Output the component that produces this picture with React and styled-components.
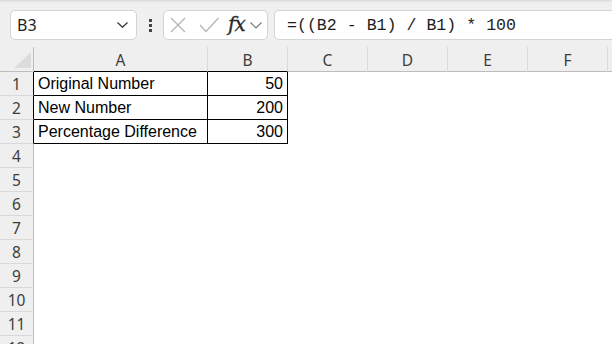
import React from 'react'
import styled, { createGlobalStyle } from 'styled-components'

const GlobalStyle = createGlobalStyle`
  html, body { margin: 0; padding: 0; background: #fff; }
  body { font-family: "Noto Sans", sans-serif; overflow: hidden; }
  * { box-sizing: border-box; }
`

const Page = styled.div`
  width: 612px;
  height: 344px;
  overflow: hidden;
  background: #fff;
`

const Toolbar = styled.div`
  height: 47px;
  display: flex;
  align-items: flex-start;
  padding: 10px 0 0 10px;
  background: linear-gradient(#d9d9d9 0px, #ebebeb 2px, #f0f0f0 4px, #f0f0f0 100%);
`

const NameBox = styled.div`
  width: 127px;
  height: 30px;
  background: #fff;
  border: 1px solid #d4d4d4;
  border-radius: 5px;
  display: flex;
  align-items: center;
  justify-content: space-between;
  padding: 0 8px 0 6px;
  font-size: 16px;
  color: #1e1e1e;
`

const Dots = styled.div`
  width: 26px;
  height: 30px;
  display: flex;
  flex-direction: column;
  align-items: center;
  justify-content: center;
  gap: 2px;
  span {
    width: 3px;
    height: 3px;
    background: #444;
  }
`

const FxBox = styled.div`
  width: 105px;
  height: 30px;
  background: #fff;
  border: 1px solid #d4d4d4;
  border-radius: 5px;
  display: flex;
  align-items: center;
  padding-left: 6px;
`

const FxLabel = styled.span`
  font-family: "DejaVu Serif", serif;
  font-style: italic;
  font-size: 20px;
  color: #2a2a2a;
  margin-left: 9px;
  letter-spacing: -1px;
  line-height: 1;
  position: relative;
  top: -1px;
  -webkit-text-stroke: 0.3px #2a2a2a;
`

const FormulaBox = styled.div`
  flex: 1;
  height: 30px;
  margin-left: 6px;
  background: #fff;
  border: 1px solid #d4d4d4;
  border-right: none;
  border-radius: 5px 0 0 5px;
  display: flex;
  align-items: center;
  padding-left: 12px;
  font-family: "Liberation Mono", monospace;
  font-size: 16.6px;
  color: #1e1e1e;
  white-space: pre;
`

const Sheet = styled.div`
  display: grid;
  grid-template-columns: 34px 174px 80px 80px 80px 80px 80px 80px;
  grid-template-rows: 25px;
  grid-auto-rows: 24px;
`

const Corner = styled.div`
  background: #efefef;
  border-right: 1px solid #bdbdbd;
  border-bottom: 1px solid #bdbdbd;
  position: relative;
  svg { position: absolute; left: 14px; top: 5px; }
`

const ColHead = styled.div`
  background: #efefef;
  border-right: 1px solid #d9d9d9;
  border-bottom: 1px solid ${p => (p.$edge ? '#000' : '#bdbdbd')};
  display: flex;
  align-items: center;
  justify-content: center;
  font-size: 15.5px;
  color: #3d3d3d;
  padding-top: 1px;
`

const RowHead = styled.div`
  background: #efefef;
  border-right: 1px solid ${p => (p.$edge ? '#000' : '#bdbdbd')};
  border-bottom: 1px solid #d9d9d9;
  display: flex;
  align-items: center;
  justify-content: center;
  font-size: 15.5px;
  color: #3d3d3d;
`

const Cell = styled.div`
  border-right: 1px solid ${p => (p.$boxed ? '#000' : 'transparent')};
  border-bottom: 1px solid ${p => (p.$boxed ? '#000' : 'transparent')};
  display: flex;
  align-items: center;
  justify-content: ${p => (p.$num ? 'flex-end' : 'flex-start')};
  padding: 0 4px 0 4px;
  font-family: "Liberation Sans", sans-serif;
  font-size: 16px;
  color: #000;
  white-space: nowrap;
`

const cols = ['A', 'B', 'C', 'D', 'E', 'F', 'G']

const data = [
  ['Original Number', '50'],
  ['New Number', '200'],
  ['Percentage Difference', '300'],
]

function App() {
  const rows = Array.from({ length: 12 }, (_, i) => i + 1)
  return (
    <Page>
      <GlobalStyle />
      <Toolbar>
        <NameBox>
          <span>B3</span>
          <svg width="11" height="6" viewBox="0 0 11 6">
            <path d="M0.5 0.5 L5.5 5.3 L10.5 0.5" fill="none" stroke="#333" strokeWidth="1.2" />
          </svg>
        </NameBox>
        <Dots>
          <span />
          <span />
          <span />
        </Dots>
        <FxBox>
          <svg width="16" height="16" viewBox="0 0 16 16">
            <path d="M1 1 L15 15 M15 1 L1 15" stroke="#b5b5b5" strokeWidth="1.3" fill="none" />
          </svg>
          <svg width="20" height="16" viewBox="0 0 20 16" style={{ marginLeft: 13 }}>
            <path d="M1 8 L7 14.5 L19.5 1" stroke="#b5b5b5" strokeWidth="1.3" fill="none" />
          </svg>
          <FxLabel>fx</FxLabel>
          <svg width="12" height="7" viewBox="0 0 12 7" style={{ marginLeft: 5 }}>
            <path d="M0.5 0.5 L6 6 L11.5 0.5" fill="none" stroke="#777" strokeWidth="1.1" />
          </svg>
        </FxBox>
        <FormulaBox>=((B2 - B1) / B1) * 100</FormulaBox>
      </Toolbar>
      <Sheet>
        <Corner>
          <svg width="17" height="16" viewBox="0 0 17 16">
            <polygon points="17,0 17,16 0,16" fill="#dcdcdc" />
          </svg>
        </Corner>
        {cols.map((c, i) => (
          <ColHead key={c} $edge={i < 2}>{c}</ColHead>
        ))}
        {rows.map(r => (
          <React.Fragment key={r}>
            <RowHead $edge={r <= 3}>{r}</RowHead>
            {cols.map((c, ci) => {
              const row = data[r - 1]
              const boxed = row && ci < 2
              return (
                <Cell key={c} $boxed={boxed} $num={ci === 1}>
                  {boxed ? row[ci] : ''}
                </Cell>
              )
            })}
          </React.Fragment>
        ))}
      </Sheet>
    </Page>
  )
}

export default App
